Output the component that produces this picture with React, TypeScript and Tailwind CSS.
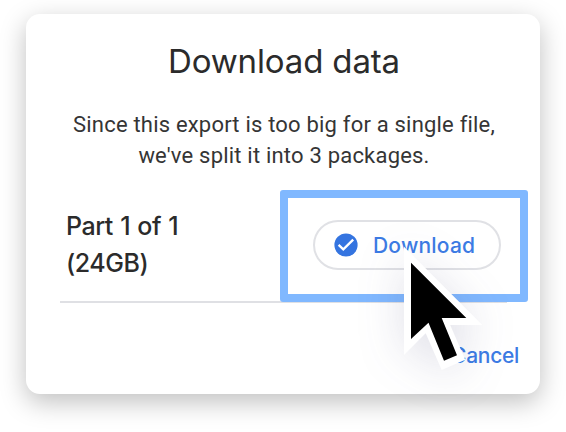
function CheckCircle() {
  return (
    <svg viewBox="0 0 24 24" className="h-6 w-6 shrink-0" aria-hidden="true">
      <circle cx="12" cy="12" r="11.6" fill="#3474e0" />
      <path d="M4.6 11.8l4.7 4.5L19.2 6.6" fill="none" stroke="#fff" strokeWidth="2.3" />
    </svg>
  );
}

function Pointer() {
  return (
    <svg
      viewBox="0 0 79 124"
      className="pointer-events-none absolute top-[232px] left-[378px] h-[124px] w-[79px] overflow-visible drop-shadow-[0_6px_22px_rgba(60,60,110,0.17)]"
      aria-hidden="true"
    >
      <path d="M0 .7V109l21.7-21.7L37.7 124l23.5-10.3L46.2 79h32.1z" fill="#fff" />
      <path d="M7 16.7V93l17.5-16.3L40 114.7l13-5.4L37.7 72h24.6z" fill="#000" />
    </svg>
  );
}

export default function App() {
  return (
    <main className="h-[432px] w-[566px] overflow-hidden bg-white px-[26px] pt-[14px] font-['Inter',sans-serif] text-[#2b2b2b]">
      <section className="relative flex h-[380px] w-[514px] flex-col rounded-[14px] bg-white shadow-[0_8px_26px_rgba(0,0,0,0.25)]">
        <h1 className="mt-[25px] pl-[2px] text-center text-[33px] leading-[44px] tracking-[-0.15px] whitespace-nowrap">
          Download data
        </h1>
        <p className="mt-[26px] pl-[2px] text-center font-['Roboto',sans-serif] text-[22px] leading-[31px] tracking-[0.2px] whitespace-nowrap text-[#353535]">
          Since this export is too big for a single file,
          <br />
          we've split it into 3 packages.
        </p>
        <div className="mt-[31px] mr-[33px] ml-[34px] flex h-[101px] shrink-0 items-start justify-between border-b-2 border-[#dfe0e4] pl-[6px]">
          <div className="pt-[6px] text-[25px] leading-[37px] font-medium tracking-[-0.45px] [word-spacing:1px] whitespace-nowrap">
            Part 1 of 1
            <br />
            (24GB)
          </div>
          <button className="mt-[18px] mr-[6px] flex h-[50px] w-[188px] items-center gap-[15px] rounded-full border-2 border-[#e0e1e5] pl-[19px] text-[21px] font-medium tracking-[0.2px] text-[#3c7be4]">
            <CheckCircle />
            <span className="pt-px">Download</span>
          </button>
        </div>
        <button className="mt-[37px] mr-[21px] self-end text-[21px] leading-[32px] font-medium tracking-[-0.3px] text-[#3c7be4]">
          Cancel
        </button>
        <div className="pointer-events-none absolute top-[176px] left-[254px] h-[112px] w-[248px] rounded-[3px] border-8 border-[#80b8ff]" />
        <Pointer />
      </section>
    </main>
  );
}
